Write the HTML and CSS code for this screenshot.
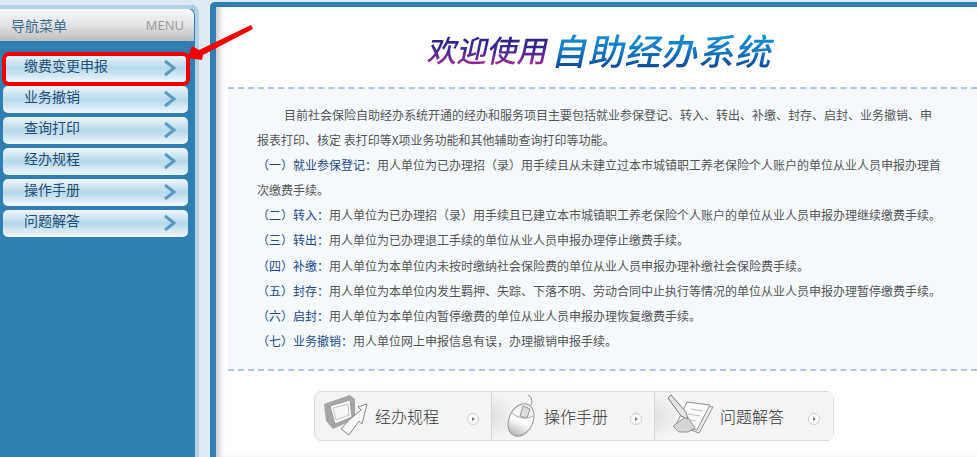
FILE: index.html
```html
<!DOCTYPE html>
<html lang="zh">
<head>
<meta charset="utf-8">
<title>自助经办系统</title>
<link rel="stylesheet" href="styles.css">
</head>
<body>
<div class="page">
  <aside class="sidebar">
    <div class="side-head"><span class="side-title">导航菜单</span><span class="side-en">MENU</span></div>
    <nav class="menu">
      <a class="item marked"><span>缴费变更申报</span><svg class="chev" viewBox="0 0 14 18"><path d="M2 2l9 7-9 7" /></svg></a>
      <a class="item"><span>业务撤销</span><svg class="chev" viewBox="0 0 14 18"><path d="M2 2l9 7-9 7" /></svg></a>
      <a class="item"><span>查询打印</span><svg class="chev" viewBox="0 0 14 18"><path d="M2 2l9 7-9 7" /></svg></a>
      <a class="item"><span>经办规程</span><svg class="chev" viewBox="0 0 14 18"><path d="M2 2l9 7-9 7" /></svg></a>
      <a class="item"><span>操作手册</span><svg class="chev" viewBox="0 0 14 18"><path d="M2 2l9 7-9 7" /></svg></a>
      <a class="item"><span>问题解答</span><svg class="chev" viewBox="0 0 14 18"><path d="M2 2l9 7-9 7" /></svg></a>
    </nav>
  </aside>
  <main class="main">
    <div class="sheet">
      <h1 class="title"><span class="t1">欢迎使用</span><span class="t2">自助经办系统</span></h1>
      <section class="intro">
        <p class="lead">目前社会保险自助经办系统开通的经办和服务项目主要包括就业参保登记、转入、转出、补缴、封存、启封、业务撤销、申报表打印、核定 表打印等X项业务功能和其他辅助查询打印等功能。</p>
        <p><b>（一）就业参保登记：</b>用人单位为已办理招（录）用手续且从未建立过本市城镇职工养老保险个人账户的单位从业人员申报办理首次缴费手续。</p>
        <p><b>（二）转入：</b>用人单位为已办理招（录）用手续且已建立本市城镇职工养老保险个人账户的单位从业人员申报办理继续缴费手续。</p>
        <p><b>（三）转出：</b>用人单位为已办理退工手续的单位从业人员申报办理停止缴费手续。</p>
        <p><b>（四）补缴：</b>用人单位为本单位内未按时缴纳社会保险费的单位从业人员申报办理补缴社会保险费手续。</p>
        <p><b>（五）封存：</b>用人单位为本单位内发生羁押、失踪、下落不明、劳动合同中止执行等情况的单位从业人员申报办理暂停缴费手续。</p>
        <p><b>（六）启封：</b>用人单位为本单位内暂停缴费的单位从业人员申报办理恢复缴费手续。</p>
        <p><b>（七）业务撤销：</b>用人单位网上申报信息有误，办理撤销申报手续。</p>
      </section>
      <div class="quick">
        <a class="q q1">
          <svg class="qi" width="50" height="46" viewBox="0 0 50 46" fill="none">
            <path d="M1 11L27 2l5 4v20L10 36l-7-8z" fill="#a6a6a6"/>
            <path d="M7 13l20-6 2 17-17 7z" fill="#fff" stroke="#9a9a9a"/>
            <path d="M10 15l15-4 1 11-13 5z" fill="#f6f6f6" stroke="#c4c4c4"/>
            <path d="M44 11l-9 3 3 3-12 10-8 9 8 6 10-14 3 3z" fill="#f8f8f8" stroke="#888"/>
          </svg>
          <span class="qt">经办规程</span><i class="dot"></i>
        </a>
        <a class="q q2">
          <svg class="qi" width="36" height="46" viewBox="0 0 36 46" fill="none">
            <defs><linearGradient id="m" x1="0" y1="0" x2="0" y2="1"><stop offset="0" stop-color="#ececec"/><stop offset=".55" stop-color="#fff"/><stop offset="1" stop-color="#b5b5b5"/></linearGradient></defs>
            <path d="M26 12c2-4 0-9-3-10" stroke="#8c8c8c"/>
            <ellipse cx="16" cy="27" rx="12" ry="17" transform="rotate(25 16 27)" fill="url(#m)" stroke="#999"/>
            <path d="M7 20c6 5 13 7 21 3" stroke="#aaa"/>
            <path d="M18 13l7 3-3 9-7-2z" fill="#dcdcdc" stroke="#999"/>
          </svg>
          <span class="qt">操作手册</span><i class="dot"></i>
        </a>
        <a class="q q3">
          <svg class="qi" width="48" height="46" viewBox="0 0 48 46" fill="none">
            <path d="M22 11l24 3-14 26-8-3z" fill="#eee" stroke="#8f8f8f"/>
            <path d="M20 9l23 3-13 25-21-5z" fill="#fafafa" stroke="#8f8f8f"/>
            <path d="M24 16l12 2M21 21l12 2M18 26l11 2" stroke="#bbb"/>
            <path d="M6 33l14-10 8 12-7 4H12z" fill="#d4d4d4" stroke="#999"/>
            <path d="M1 5l3-3 15 17 2 7-7-3z" fill="#e4e4e4" stroke="#808080"/>
          </svg>
          <span class="qt">问题解答</span><i class="dot"></i>
        </a>
      </div>
    </div>
  </main>
  <svg class="pointer" width="70" height="44" viewBox="0 0 70 44"><path d="M0 34l5-12 7 4L64 1l2 4-50 26-1 5z" fill="#f40000"/></svg>
</div>
</body>
</html>
```
FILE: styles.css
```css
* { box-sizing: border-box; }
html, body { margin: 0; padding: 0; }
body {
  width: 977px; height: 457px; overflow: hidden;
  background: #deebf5;
  font-family: "Noto Sans CJK SC", "Liberation Sans", sans-serif;
  text-spacing-trim: space-all;
}
.page { position: relative; display: flex; width: 977px; height: 457px; padding-top: 5px; }
.sidebar {
  width: 199px; margin-right: 11px; flex: none;
  padding-top: 4px;
  background: #2f7fb2;
  border-top-right-radius: 8px;
  border: solid #b3d2e6; border-width: 0 4px 0 0;
  box-shadow: inset 0 4px 0 #b3d2e6;
}
.side-head {
  height: 32px; display: flex; align-items: center; justify-content: space-between;
  padding: 0 10px 0 11px;
  margin-right: 1px;
  background: linear-gradient(#f7f7f7, #e6e6e6 45%, #bdbdbd);
  border-radius: 0 6px 0 0;
}
.side-title { font-size: 14px; color: #3f6f8f; }
.side-en { font-family: "Open Sans", "Liberation Sans", sans-serif; font-size: 13px; color: #999; }
.menu { display: flex; flex-direction: column; gap: 4px; padding: 14px 0 0 3px; }
.item {
  position: relative;
  display: flex; align-items: center; justify-content: space-between;
  width: 185px; height: 27px; padding: 0 11px 0 21px;
  background: linear-gradient(#eef6fb, #b6d8ea 50%, #c3dfee 62%, #f2f8fc);
  border-radius: 5px;
  color: #1f4e79; font-size: 14px;
}
.item span { position: relative; top: -4px; }
.marked::after {
  content: ""; position: absolute; left: -1px; right: -2px; top: -3px; bottom: -4px;
  border: 4px solid #f00000; border-radius: 7px;
}
.chev { width: 14px; height: 18px; fill: none; stroke: #5b9ac2; stroke-width: 3; position: relative; top: -1px; }
.main {
  flex: 1; min-width: 0; margin-top: -3px;
  background: #2f7fb2; padding: 5px 0 0 6px; overflow: hidden;
  border-top-left-radius: 5px;
}
.sheet {
  height: 100%; background: #fff; padding: 0 0 0 12px;
  box-shadow: inset 6px 0 5px -2px #cfcfcf;
  display: flex; flex-direction: column;
}
.title {
  margin: 0; height: 80px; padding: 4px 0 0 201px;
  display: flex; align-items: center; font-weight: 500; white-space: nowrap;
}
.t1, .t2 {
  display: inline-block; transform: skewX(-12deg);
  -webkit-background-clip: text; background-clip: text; color: transparent;
}
.t1 { font-size: 30px; line-height: 38px; background-image: linear-gradient(#2b1f7c, #3a2a90 50%, #b0279b); margin-right: 5px; }
.t2 { font-size: 36px; line-height: 44px; letter-spacing: 0.8px; background-image: linear-gradient(#1d9bd6, #1478c4 55%, #123f8c); }
.intro {
  height: 284px; padding: 13px 34px 0 29px;
  background: #f6faff;
  border-top: 2px dashed #b0c4f0; border-bottom: 2px dashed #b0c4f0;
  font-size: 12px; line-height: 25.1px; color: #555;
}
.intro p { margin: 0; }
.intro b { font-weight: 400; color: #1b4a87; }
.lead { text-indent: 27px; }
.quick {
  display: flex; align-items: center;
  width: 520px; height: 50px; margin: 20px 0 0 86px;
  background: #f4f4f4; border: 1px solid #dcdcdc; border-radius: 7px;
}
.q { display: flex; align-items: center; height: 100%; }
.q1 { width: 176px; padding-left: 8px; }
.q2 { width: 163px; padding-left: 13px; border-left: 1px solid #d6d6d6; background: radial-gradient(ellipse 24px 24px at 0 50%, #e0e0e0, #f4f4f4); }
.q3 { flex: 1; padding-left: 12px; border-left: 1px solid #d6d6d6; background: radial-gradient(ellipse 24px 24px at 0 50%, #e0e0e0, #f4f4f4); }
.qi { flex: none; }
.qt { font-size: 16px; font-weight: 200; color: #333; margin-left: 2px; }
.q2 .qt { margin-left: 3px; }
.q3 .qt { margin-left: 5px; }
.dot {
  position: relative; width: 12px; height: 12px; margin-left: 28px; margin-top: 5px;
  border: 1px solid #ccc; border-radius: 50%; background: #fff;
}
.q2 .dot { margin-left: 22px; }
.q3 .dot { margin-left: 24px; }
.dot::after {
  content: ""; position: absolute; left: 4px; top: 3px;
  border-left: 3px solid #777; border-top: 2px solid transparent; border-bottom: 2px solid transparent;
}
.pointer { position: absolute; left: 187px; top: 24px; }
```
